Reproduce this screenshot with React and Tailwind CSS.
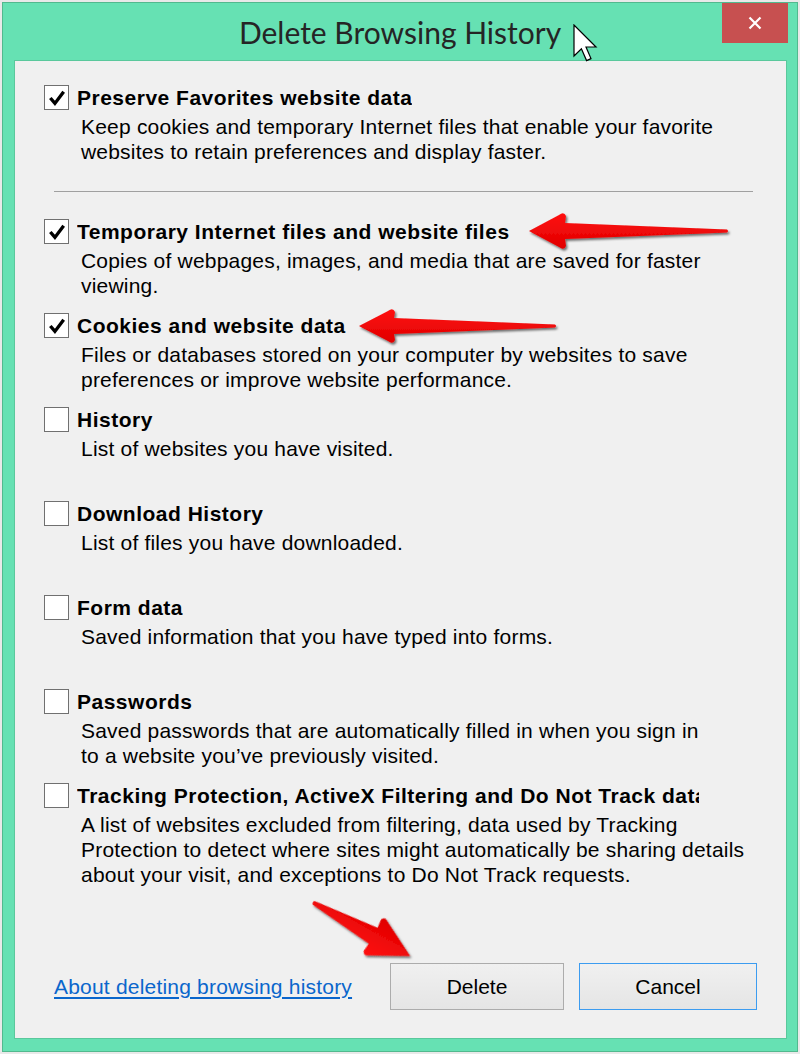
const items = [
  {
    title: 'Temporary Internet files and website files',
    desc: ['Copies of webpages, images, and media that are saved for faster', 'viewing.'],
    checked: true,
  },
  {
    title: 'Cookies and website data',
    desc: ['Files or databases stored on your computer by websites to save', 'preferences or improve website performance.'],
    checked: true,
  },
  { title: 'History', desc: ['List of websites you have visited.'] },
  { title: 'Download History', desc: ['List of files you have downloaded.'] },
  { title: 'Form data', desc: ['Saved information that you have typed into forms.'] },
  {
    title: 'Passwords',
    desc: ['Saved passwords that are automatically filled in when you sign in', 'to a website you\u2019ve previously visited.'],
  },
  {
    title: 'Tracking Protection, ActiveX Filtering and Do Not Track data',
    desc: [
      'A list of websites excluded from filtering, data used by Tracking',
      'Protection to detect where sites might automatically be sharing details',
      'about your visit, and exceptions to Do Not Track requests.',
    ],
  },
]

function Checkbox({ checked }) {
  return (
    <span className="flex h-[25px] w-[25px] shrink-0 items-center justify-center border border-[#707070] bg-white">
      {checked && (
        <svg viewBox="0 0 24 24" className="h-[20px] w-[20px]">
          <path d="M4 12 L9.5 18.5 L20 4.5" fill="none" stroke="#000" strokeWidth="4" strokeLinecap="butt" strokeLinejoin="miter" />
        </svg>
      )}
    </span>
  )
}

function Option({ title, desc, checked, className = '' }) {
  return (
    <div className={className}>
      <div className="flex h-[29px] items-center gap-[8px]">
        <Checkbox checked={checked} />
        <span className="max-w-[622px] overflow-hidden whitespace-nowrap text-[21px] font-bold tracking-[0.5px] text-black">{title}</span>
      </div>
      <div className="mt-[2px] pl-[37px] text-[21px] leading-[25px] tracking-[0.2px] text-black">
        {desc.map((line) => (
          <div key={line} className="whitespace-nowrap">{line}</div>
        ))}
      </div>
    </div>
  )
}

function arrowPath(L, h, w, s, t) {
  return `M0,0 L${h - 4},${-w + 2} Q${h + 1},${-w - 2} ${h + 3},${-w + 3} L${h + 2},${-s} L${L},${-t} Q${L + 2},0 ${L},${t} L${h + 2},${s} L${h + 3},${w - 3} Q${h + 1},${w + 2} ${h - 4},${w - 2} Z`
}

function Arrows() {
  return (
    <svg className="pointer-events-none absolute left-0 top-0" width="800" height="1054">
      <defs>
        <filter id="shadow" x="-20%" y="-20%" width="140%" height="160%">
          <feDropShadow dx="1.5" dy="2" stdDeviation="1.2" floodColor="#000" floodOpacity="0.55" />
        </filter>
        <linearGradient id="red" x1="0" y1="0" x2="0" y2="1">
          <stop offset="0" stopColor="#ff1010" />
          <stop offset="1" stopColor="#e00000" />
        </linearGradient>
      </defs>
      <g filter="url(#shadow)" fill="url(#red)">
        <path transform="translate(529 231)" d={arrowPath(198, 34, 18, 8, 1.5)} />
        <path transform="translate(359 326)" d={arrowPath(196, 33, 17, 8, 1.5)} />
        <path transform="translate(410 956) rotate(208.9)" d={arrowPath(110, 40, 21, 9, 2)} />
      </g>
    </svg>
  )
}

function Cursor() {
  return (
    <svg className="pointer-events-none absolute left-[573px] top-[24px]" width="26" height="38" viewBox="0 0 13 19">
      <path d="M0.5 0.5 L0.5 16 L4.2 12.4 L6.8 18.3 L9 17.3 L6.5 11.5 L11.5 11.5 Z" fill="#fff" stroke="#000" strokeWidth="0.6" strokeLinejoin="miter" />
    </svg>
  )
}

export default function App() {
  return (
    <div className="relative h-[1054px] w-[800px] bg-[#e9e9e9] p-[2px] font-['Liberation_Sans',Arial,sans-serif]">
      <div className="flex h-[1050px] w-[796px] flex-col border border-[#52b98e] bg-[#66e1b3]">
        <div className="relative h-[57px] shrink-0">
          <div className="pt-[10px] text-center font-['Lato',sans-serif] text-[30px] leading-[38px] text-[#252525]">
            Delete Browsing History
          </div>
          <button className="absolute right-[9px] top-0 flex h-[40px] w-[66px] items-center justify-center bg-[#c75050]">
            <svg viewBox="0 0 14 14" className="h-[14px] w-[14px]">
              <path d="M1.5 1.5 L12.5 12.5 M12.5 1.5 L1.5 12.5" stroke="#fff" strokeWidth="2.2" />
            </svg>
          </button>
        </div>
        <div className="mb-[12px] ml-[11px] mr-[10px] flex flex-1 flex-col border border-[#5ac89c] bg-[#f0f0f0] px-[29px] pt-[22px]">
          <Option
            title="Preserve Favorites website data"
            desc={['Keep cookies and temporary Internet files that enable your favorite', 'websites to retain preferences and display faster.']}
            checked
          />
          <div className="mb-[25px] ml-[10px] mr-[4px] mt-[27px] h-px bg-[#a0a0a0]" />
          {items.map((it) => (
            <Option key={it.title} {...it} className="h-[94px] w-[710px]" />
          ))}
          <div className="mb-[28px] mt-auto flex items-center">
            <a href="#" className="ml-[10px] text-[21px] tracking-[0.2px] text-[#0a66cc] underline underline-offset-[3px]">
              About deleting browsing history
            </a>
            <div className="ml-auto flex gap-[15px]">
              <button className="h-[47px] w-[174px] border border-[#acacac] bg-gradient-to-b from-[#f0f0f0] to-[#e5e5e5] text-[21px] text-black">
                Delete
              </button>
              <button className="h-[47px] w-[178px] border border-[#3c9cf0] bg-gradient-to-b from-[#f0f0f0] to-[#e5e5e5] text-[21px] text-black">
                Cancel
              </button>
            </div>
          </div>
        </div>
      </div>
      <Arrows />
      <Cursor />
    </div>
  )
}
